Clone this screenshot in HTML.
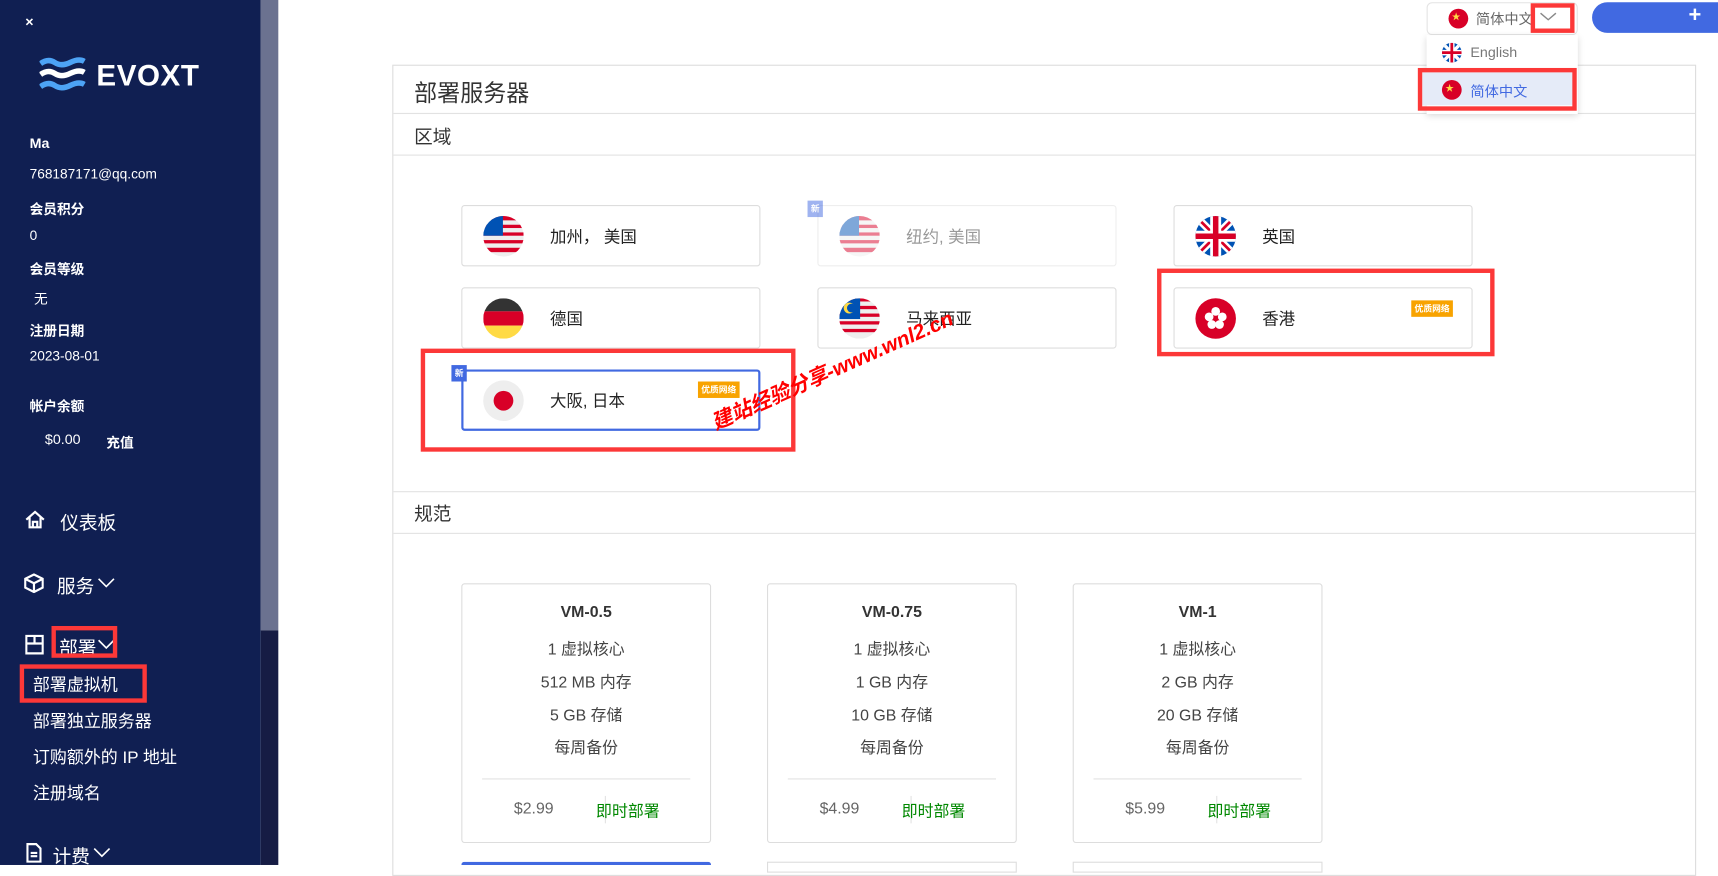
<!DOCTYPE html>
<html><head><meta charset="utf-8"><style>
*{margin:0;padding:0;box-sizing:border-box}
html,body{width:1718px;height:865px;overflow:hidden;background:#fff}
#w{position:absolute;left:0;top:0;width:1568px;height:789px;transform:scale(1.0957,1.0963);transform-origin:0 0;font-family:"Liberation Sans","Noto Sans CJK SC",sans-serif;color:#333}
.a{position:absolute;white-space:nowrap}
.sb{position:absolute;left:0;top:0;width:238px;height:789px;background:#101f52;color:#fff}
.sb .a{color:#fff;font-size:12.5px}
.b{font-weight:bold}
.nav{font-size:17px!important}
.sub{font-size:15.5px!important}
.red{position:absolute;border:4px solid #fc3838}
.card{position:absolute;width:273px;height:56px;border:1px solid #ddd;border-radius:3px;background:#fff}
.card .f{position:absolute;left:19px;top:9px;width:37px;height:37px;border-radius:50%;overflow:hidden}
.card .t{position:absolute;left:80px;top:17px;font-size:15px;color:#222}
.tag{position:absolute;background:#f8a300;color:#fff;font-size:8px;font-weight:bold;padding:2px 3px}
.new{position:absolute;background:#4169e1;color:#fff;font-size:8px;font-weight:bold;width:14px;height:15px;text-align:center;line-height:15px}
.sp{position:absolute;width:228px;height:237px;border:1px solid #ddd;border-radius:3px;text-align:center}
.sp div{position:absolute;left:0;width:100%;font-size:14.5px;color:#444}
.line{position:absolute;display:block;height:1px;background:#e2e2e2}
.chev{position:absolute}
</style></head><body><div id="w">
<div class="sb">
<div class="a" style="left:23px;top:12px;font-size:13px;font-weight:bold">×</div>
<svg class="a" style="left:36px;top:52px" width="42" height="32" viewBox="0 0 42 32"><g fill="none" stroke-width="5"><path d="M1 6 Q8 1 14 5 T28 5 T41 4" stroke="#4da3f5"/><path d="M1 16 Q8 11 14 15 T28 15 T41 14" stroke="#fff"/><path d="M1 27 Q8 22 14 26 T28 26 T41 25" stroke="#4da3f5"/></g></svg>
<div class="a b" style="left:88px;top:54px;font-size:27px;letter-spacing:0.5px;font-family:'Liberation Sans',sans-serif">EVOXT</div>
<div class="a b" style="left:27px;top:123px;font-size:13px!important">Ma</div>
<div class="a" style="left:27px;top:152px">768187171@qq.com</div>
<div class="a b" style="left:27px;top:180px">会员积分</div>
<div class="a" style="left:27px;top:208px">0</div>
<div class="a b" style="left:27px;top:235px">会员等级</div>
<div class="a" style="left:31px;top:262px">无</div>
<div class="a b" style="left:27px;top:291px">注册日期</div>
<div class="a" style="left:27px;top:318px">2023-08-01</div>
<div class="a b" style="left:27px;top:360px">帐户余额</div>
<div class="a" style="left:41px;top:393px;font-size:13px!important">$0.00</div>
<div class="a b" style="left:97px;top:393px">充值</div>
<svg class="a" style="left:22px;top:465px" width="20" height="18" viewBox="0 0 20 18"><path d="M2 9 L10 2 L18 9 M5 7 V16 H15 V7 M8 16 V11 H12 V16" fill="none" stroke="#fff" stroke-width="2"/></svg>
<div class="a nav" style="left:55px;top:463px">仪表板</div>
<svg class="a" style="left:22px;top:523px" width="18" height="18" viewBox="0 0 18 18"><path d="M9 1 L17 5 V13 L9 17 L1 13 V5 Z M1 5 L9 9 L17 5 M9 9 V17" fill="none" stroke="#fff" stroke-width="2"/></svg>
<div class="a nav" style="left:52px;top:521px">服务</div>
<svg class="chev" style="left:89px;top:527px" width="16" height="10"><path d="M1 1 L8 8 L15 1" fill="none" stroke="#fff" stroke-width="1.5"/></svg>
<svg class="a" style="left:23px;top:579px" width="17" height="18" viewBox="0 0 17 18"><path d="M1 1 H16 V17 H1 Z M1 8 H16 M8.5 1 V8" fill="none" stroke="#fff" stroke-width="2"/></svg>
<div class="a nav" style="left:54px;top:577px">部署</div>
<svg class="chev" style="left:89px;top:583px" width="16" height="10"><path d="M1 1 L8 8 L15 1" fill="none" stroke="#fff" stroke-width="1.5"/></svg>
<div class="a sub" style="left:30px;top:613px">部署虚拟机</div>
<div class="a sub" style="left:30px;top:646px">部署独立服务器</div>
<div class="a sub" style="left:30px;top:679px">订购额外的 IP 地址</div>
<div class="a sub" style="left:30px;top:712px">注册域名</div>
<svg class="a" style="left:24px;top:769px" width="14" height="18" viewBox="0 0 14 18"><path d="M1 1 H9 L13 5 V17 H1 Z M4 9 H10 M4 12 H10" fill="none" stroke="#fff" stroke-width="2"/></svg>
<div class="a nav" style="left:48px;top:767px">计费</div>
<svg class="chev" style="left:85px;top:773px" width="16" height="10"><path d="M1 1 L8 8 L15 1" fill="none" stroke="#fff" stroke-width="1.5"/></svg>
</div>
<div class="a" style="left:238px;top:0;width:16px;height:575px;background:#6b7290"></div>
<div class="a" style="left:238px;top:575px;width:16px;height:214px;background:#161c44"></div>
<div class="red" style="left:47px;top:571px;width:60px;height:29px"></div>
<div class="red" style="left:18px;top:606px;width:116px;height:35px"></div>

<div class="a" style="left:358px;top:59px;width:1190px;height:740px;border:1px solid #ddd"></div>
<div class="a" style="left:378px;top:69px;font-size:21px;color:#333">部署服务器</div>
<div class="line" style="left:359px;top:103px;width:1188px"></div>
<div class="a" style="left:378px;top:111px;font-size:17px">区域</div>
<div class="line" style="left:359px;top:141px;width:1188px"></div>

<div class="card" style="left:421px;top:187px"><div class="f"><svg width="37" height="37" viewBox="0 0 37 37"><rect width="37" height="37" fill="#eee"/><g fill="#d80027"><rect y="0" width="37" height="4"/><rect y="8" width="37" height="3"/><rect y="15" width="37" height="3"/><rect y="22" width="37" height="3"/><rect y="29" width="37" height="4"/></g><rect width="18" height="18" fill="#0052b4"/></svg></div><div class="t">加州， 美国</div></div>
<div class="card" style="left:746px;top:187px;border-color:#eee"><div class="f" style="opacity:.5"><svg width="37" height="37" viewBox="0 0 37 37"><rect width="37" height="37" fill="#eee"/><g fill="#d80027"><rect y="0" width="37" height="4"/><rect y="8" width="37" height="3"/><rect y="15" width="37" height="3"/><rect y="22" width="37" height="3"/><rect y="29" width="37" height="4"/></g><rect width="18" height="18" fill="#0052b4"/></svg></div><div class="t" style="color:#999">纽约, 美国</div></div>
<div class="new" style="left:737px;top:183px;opacity:.5">新</div>
<div class="card" style="left:1071px;top:187px"><div class="f"><svg width="37" height="37" viewBox="0 0 37 37"><rect width="37" height="37" fill="#0052b4"/><path d="M0 0 L37 37 M37 0 L0 37" stroke="#fff" stroke-width="7"/><path d="M0 0 L37 37 M37 0 L0 37" stroke="#d80027" stroke-width="2.5"/><path d="M18.5 0 V37 M0 18.5 H37" stroke="#fff" stroke-width="10"/><path d="M18.5 0 V37 M0 18.5 H37" stroke="#d80027" stroke-width="5"/></svg></div><div class="t">英国</div></div>
<div class="card" style="left:421px;top:262px"><div class="f"><svg width="37" height="37"><rect width="37" height="12" fill="#333"/><rect y="12" width="37" height="13" fill="#d80027"/><rect y="25" width="37" height="12" fill="#ffda44"/></svg></div><div class="t">德国</div></div>
<div class="card" style="left:746px;top:262px"><div class="f"><svg width="37" height="37"><rect width="37" height="37" fill="#eee"/><g fill="#d80027"><rect y="0" width="37" height="3"/><rect y="7" width="37" height="3"/><rect y="14" width="37" height="3"/><rect y="21" width="37" height="3"/><rect y="28" width="37" height="3"/></g><rect width="19" height="19" fill="#0052b4"/><circle cx="9" cy="9" r="5" fill="#ffda44"/><circle cx="11" cy="9" r="4" fill="#0052b4"/></svg></div><div class="t">马来西亚</div></div>
<div class="card" style="left:1071px;top:262px"><div class="f" style="background:#d80027"><svg width="37" height="37"><g fill="#fff"><circle cx="18.5" cy="12" r="4"/><circle cx="24.5" cy="17" r="4"/><circle cx="22" cy="24" r="4"/><circle cx="15" cy="24" r="4"/><circle cx="12.5" cy="17" r="4"/></g><circle cx="18.5" cy="19" r="2" fill="#d80027"/></svg></div><div class="t">香港</div><div class="tag" style="left:216px;top:11px">优质网络</div></div>
<div class="card" style="left:421px;top:337px;border:2px solid #4169e1"><div class="f" style="left:18px;top:8px;background:#eee"><svg width="37" height="37"><circle cx="18.5" cy="18.5" r="9" fill="#d80027"/></svg></div><div class="t" style="left:79px;top:16px">大阪, 日本</div><div class="tag" style="left:214px;top:9px">优质网络</div></div>
<div class="new" style="left:412px;top:333px">新</div>

<div class="line" style="left:359px;top:448px;width:1188px"></div>
<div class="a" style="left:378px;top:455px;font-size:17px">规范</div>
<div class="line" style="left:359px;top:486px;width:1188px"></div>

<div class="sp" style="left:421px;top:532px"><div class="b" style="top:18px;color:#333">VM-0.5</div><div style="top:48px">1 虚拟核心</div><div style="top:78px">512 MB 内存</div><div style="top:108px">5 GB 存储</div><div style="top:138px">每周备份</div><span class="line" style="left:18px;top:177px;width:190px"></span><div style="top:197px;width:auto;left:47px;color:#666">$2.99</div><span class="line" style="left:130px;top:193px;width:1px;height:25px"></span><div style="top:196px;width:auto;left:122px;color:#080">即时部署</div></div>
<div class="sp" style="left:700px;top:532px"><div class="b" style="top:18px;color:#333">VM-0.75</div><div style="top:48px">1 虚拟核心</div><div style="top:78px">1 GB 内存</div><div style="top:108px">10 GB 存储</div><div style="top:138px">每周备份</div><span class="line" style="left:18px;top:177px;width:190px"></span><div style="top:197px;width:auto;left:47px;color:#666">$4.99</div><span class="line" style="left:130px;top:193px;width:1px;height:25px"></span><div style="top:196px;width:auto;left:122px;color:#080">即时部署</div></div>
<div class="sp" style="left:979px;top:532px"><div class="b" style="top:18px;color:#333">VM-1</div><div style="top:48px">1 虚拟核心</div><div style="top:78px">2 GB 内存</div><div style="top:108px">20 GB 存储</div><div style="top:138px">每周备份</div><span class="line" style="left:18px;top:177px;width:190px"></span><div style="top:197px;width:auto;left:47px;color:#666">$5.99</div><span class="line" style="left:130px;top:193px;width:1px;height:25px"></span><div style="top:196px;width:auto;left:122px;color:#080">即时部署</div></div>
<div class="a" style="left:421px;top:786px;width:228px;height:10px;border-top:3px solid #4169e1;border-radius:3px 3px 0 0"></div>
<div class="a" style="left:700px;top:786px;width:228px;height:10px;border:1px solid #ddd"></div>
<div class="a" style="left:979px;top:786px;width:228px;height:10px;border:1px solid #ddd"></div>

<div class="red" style="left:1056px;top:245px;width:308px;height:80px"></div>
<div class="red" style="left:384px;top:318px;width:342px;height:94px"></div>
<div class="a" style="left:650px;top:372px;font-size:19px;font-weight:bold;font-style:italic;color:#f00;transform:rotate(-24deg);transform-origin:0 50%">建站经验分享-www.wnl2.cn</div>

<div class="a" style="left:1302px;top:2px;width:138px;height:30px;background:#fff;border:1px solid #e4e4e4;border-radius:5px"></div>
<div class="a" style="left:1322px;top:8px;width:18px;height:18px;border-radius:50%;background:#d80027"><span style="position:absolute;left:3px;top:2px;color:#ffda44;font-size:8px">★</span></div>
<div class="a" style="left:1347px;top:7px;font-size:13px;color:#666">简体中文</div>
<svg class="a" style="left:1405px;top:11px" width="16" height="9"><path d="M1 1 L8 7 L15 1" fill="none" stroke="#888" stroke-width="1.3"/></svg>
<div class="red" style="left:1397px;top:3px;width:40px;height:27px"></div>
<div class="a" style="left:1302px;top:32px;width:138px;height:72px;background:#fff;box-shadow:0 2px 6px rgba(0,0,0,.15)"></div>
<div class="a" style="left:1316px;top:39px;width:18px;height:18px;border-radius:50%;overflow:hidden"><svg width="18" height="18"><rect width="18" height="18" fill="#0052b4"/><path d="M0 0 L18 18 M18 0 L0 18" stroke="#fff" stroke-width="3"/><path d="M9 0 V18 M0 9 H18" stroke="#fff" stroke-width="5"/><path d="M9 0 V18 M0 9 H18" stroke="#d80027" stroke-width="2.5"/></svg></div>
<div class="a" style="left:1342px;top:40px;font-size:13px;color:#777">English</div>
<div class="a" style="left:1298px;top:66px;width:138px;height:30px;background:#e5ebf8"></div>
<div class="a" style="left:1316px;top:73px;width:18px;height:18px;border-radius:50%;background:#d80027"><span style="position:absolute;left:3px;top:2px;color:#ffda44;font-size:8px">★</span></div>
<div class="a" style="left:1342px;top:73px;font-size:13px;color:#4169e1">简体中文</div>
<div class="red" style="left:1294px;top:62px;width:145px;height:39px"></div>
<div class="a" style="left:1453px;top:2px;width:130px;height:28px;background:#4169e1;border-radius:14px"></div>
<div class="a" style="left:1541px;top:3px;font-size:20px;color:#fff;font-weight:bold">+</div>
</div></body></html>
